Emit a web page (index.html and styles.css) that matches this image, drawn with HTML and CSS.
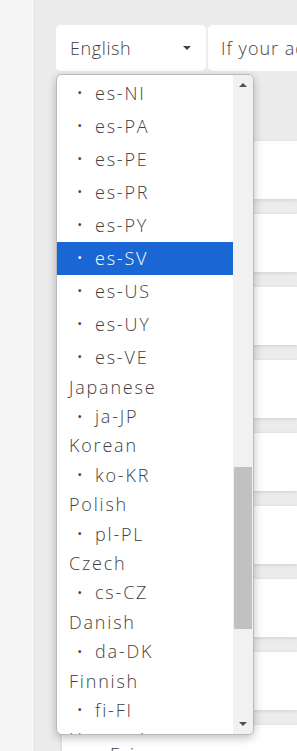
FILE: index.html
```html
<!DOCTYPE html>
<html lang="en">
<head>
    <meta charset="UTF-8">
    <meta name="viewport" content="width=device-width, initial-scale=1.0">
    <title>Sprache wählen</title>
    <link rel="stylesheet" href="styles.css">
</head>
<body>

    <!-- Seitenleiste -->
    <aside class="sidebar"></aside>

    <main class="content">

        <!-- Sprache + Eingabe -->
        <div class="toolbar">
            <div class="select-wrap">
                <div class="select-box">
                    <span>English</span>
                    <span class="caret"></span>
                </div>

                <!-- offene Auswahlliste -->
                <div class="dropdown">
                    <div class="options">
                        <div class="opt"><span class="dot">•</span>es-NI</div>
                        <div class="opt"><span class="dot">•</span>es-PA</div>
                        <div class="opt"><span class="dot">•</span>es-PE</div>
                        <div class="opt"><span class="dot">•</span>es-PR</div>
                        <div class="opt"><span class="dot">•</span>es-PY</div>
                        <div class="opt selected"><span class="dot">•</span>es-SV</div>
                        <div class="opt"><span class="dot">•</span>es-US</div>
                        <div class="opt"><span class="dot">•</span>es-UY</div>
                        <div class="opt"><span class="dot">•</span>es-VE</div>
                        <div class="group">Japanese</div>
                        <div class="opt small"><span class="dot">•</span>ja-JP</div>
                        <div class="group">Korean</div>
                        <div class="opt small"><span class="dot">•</span>ko-KR</div>
                        <div class="group">Polish</div>
                        <div class="opt small"><span class="dot">•</span>pl-PL</div>
                        <div class="group">Czech</div>
                        <div class="opt small"><span class="dot">•</span>cs-CZ</div>
                        <div class="group">Danish</div>
                        <div class="opt small"><span class="dot">•</span>da-DK</div>
                        <div class="group">Finnish</div>
                        <div class="opt small"><span class="dot">•</span>fi-FI</div>
                        <div class="group">Hungarian</div>
                    </div>
                    <div class="scrollbar">
                        <span class="arrow up"></span>
                        <div class="track"><div class="thumb"></div></div>
                        <span class="arrow down"></span>
                    </div>
                </div>
            </div>
            <div class="text-box">If your address is not listed</div>
        </div>

        <!-- Karten -->
        <div class="cards">
            <div class="card"></div>
            <div class="card"></div>
            <div class="card"></div>
            <div class="card"></div>
            <div class="card"></div>
            <div class="card"></div>
            <div class="card"></div>
            <div class="card"></div>
            <div class="card"><span class="card-name">Eric</span></div>
        </div>

    </main>

</body>
</html>
```

FILE: styles.css
```css
body {
    font-family: 'Open Sans', sans-serif;
    font-weight: 350;
    letter-spacing: 1.5px;
    background-color: #ececec;
    margin: 0;
    padding: 0;
    color: #3f3f3f;
    display: flex;
    height: 751px;
    overflow: hidden;
}
.sidebar {
    width: 34px;
    flex-shrink: 0;
    background-color: #f5f5f5;
    border-right: 1px solid #e2e2e2;
}
.content {
    flex: 1;
    padding: 25px 0 0 21px;
    overflow: hidden;
}
.toolbar {
    display: flex;
    gap: 2px;
    width: 500px;
}
.select-wrap {
    position: relative;
    width: 150px;
}
.select-box {
    height: 46px;
    box-sizing: border-box;
    background-color: #fff;
    border-radius: 5px;
    display: flex;
    align-items: center;
    justify-content: space-between;
    padding: 0 15px 0 14px;
    font-size: 18px;
    letter-spacing: 0.6px;
}
.caret {
    width: 0;
    height: 0;
    border-left: 4px solid transparent;
    border-right: 4px solid transparent;
    border-top: 4px solid #444;
}
.text-box {
    flex: 1;
    height: 46px;
    box-sizing: border-box;
    background-color: #fff;
    border-radius: 5px;
    padding: 0 13px;
    display: flex;
    align-items: center;
    font-size: 18px;
    letter-spacing: 1px;
    white-space: nowrap;
}
.dropdown {
    position: absolute;
    top: 49px;
    left: 0;
    z-index: 5;
    width: 198px;
    height: 661px;
    box-sizing: border-box;
    background-color: #fff;
    border: 1px solid #b9b9b9;
    border-radius: 6px;
    box-shadow: 0 3px 10px rgba(0, 0, 0, 0.25);
    display: flex;
    overflow: hidden;
}
.options {
    flex: 1;
    padding-top: 2px;
    font-size: 18px;
    letter-spacing: 1.8px;
}
.opt {
    height: 33px;
    box-sizing: border-box;
    padding-bottom: 2px;
    display: flex;
    align-items: center;
    padding-left: 21px;
}
.opt.small {
    height: 29.4px;
    padding-bottom: 4px;
}
.group {
    height: 29.4px;
    box-sizing: border-box;
    padding-bottom: 4px;
    display: flex;
    align-items: center;
    padding-left: 12px;
}
.dot {
    font-size: 9px;
    font-weight: 700;
    width: 17px;
    letter-spacing: 0;
}
.selected {
    background-color: #1a66d4;
    color: #fff;
}
.scrollbar {
    width: 20px;
    background-color: #f1f1f1;
    display: flex;
    flex-direction: column;
    align-items: center;
}
.arrow {
    width: 0;
    height: 0;
    border-left: 4px solid transparent;
    border-right: 4px solid transparent;
    margin: 8px 0;
}
.arrow.up {
    border-bottom: 4px solid #505050;
}
.arrow.down {
    border-top: 4px solid #505050;
}
.track {
    flex: 1;
    width: 100%;
    display: flex;
    flex-direction: column;
    justify-content: flex-end;
    padding-bottom: 85px;
    box-sizing: border-box;
}
.thumb {
    height: 162px;
    margin: 0 1px 0 1px;
    background-color: #c1c1c1;
}
.cards {
    margin-top: 70px;
    padding-left: 6px;
}
.card {
    height: 58px;
    margin-bottom: 15px;
    background-color: #fff;
    box-shadow: 0 1px 4px rgba(0, 0, 0, 0.12);
    padding: 17px 0 0 48px;
    box-sizing: border-box;
    font-size: 18px;
}
```
